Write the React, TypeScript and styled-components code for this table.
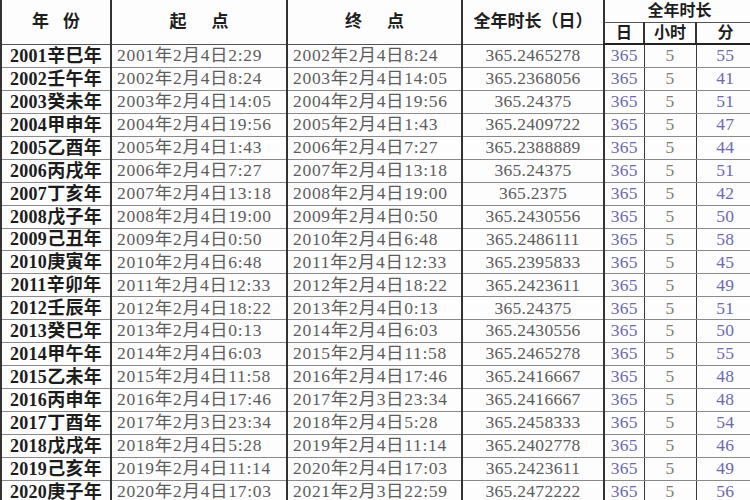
import styled, { createGlobalStyle } from 'styled-components';

const GlobalStyle = createGlobalStyle`
    html, body {
        margin: 0;
        padding: 0;
        background: #fdfdfd;
        overflow: hidden;
    }
    body {
        width: 750px;
        height: 500px;
        font-family: 'Liberation Serif', 'Noto Sans CJK SC', serif;
    }
`;

type Row = {
    year: string;
    start: string;
    end: string;
    days: string;
    min: number;
};

const rows: Row[] = [
    { year: '2001辛巳年', start: '2001年2月4日2:29', end: '2002年2月4日8:24', days: '365.2465278', min: 55 },
    { year: '2002壬午年', start: '2002年2月4日8:24', end: '2003年2月4日14:05', days: '365.2368056', min: 41 },
    { year: '2003癸未年', start: '2003年2月4日14:05', end: '2004年2月4日19:56', days: '365.24375', min: 51 },
    { year: '2004甲申年', start: '2004年2月4日19:56', end: '2005年2月4日1:43', days: '365.2409722', min: 47 },
    { year: '2005乙酉年', start: '2005年2月4日1:43', end: '2006年2月4日7:27', days: '365.2388889', min: 44 },
    { year: '2006丙戌年', start: '2006年2月4日7:27', end: '2007年2月4日13:18', days: '365.24375', min: 51 },
    { year: '2007丁亥年', start: '2007年2月4日13:18', end: '2008年2月4日19:00', days: '365.2375', min: 42 },
    { year: '2008戊子年', start: '2008年2月4日19:00', end: '2009年2月4日0:50', days: '365.2430556', min: 50 },
    { year: '2009己丑年', start: '2009年2月4日0:50', end: '2010年2月4日6:48', days: '365.2486111', min: 58 },
    { year: '2010庚寅年', start: '2010年2月4日6:48', end: '2011年2月4日12:33', days: '365.2395833', min: 45 },
    { year: '2011辛卯年', start: '2011年2月4日12:33', end: '2012年2月4日18:22', days: '365.2423611', min: 49 },
    { year: '2012壬辰年', start: '2012年2月4日18:22', end: '2013年2月4日0:13', days: '365.24375', min: 51 },
    { year: '2013癸巳年', start: '2013年2月4日0:13', end: '2014年2月4日6:03', days: '365.2430556', min: 50 },
    { year: '2014甲午年', start: '2014年2月4日6:03', end: '2015年2月4日11:58', days: '365.2465278', min: 55 },
    { year: '2015乙未年', start: '2015年2月4日11:58', end: '2016年2月4日17:46', days: '365.2416667', min: 48 },
    { year: '2016丙申年', start: '2016年2月4日17:46', end: '2017年2月3日23:34', days: '365.2416667', min: 48 },
    { year: '2017丁酉年', start: '2017年2月3日23:34', end: '2018年2月4日5:28', days: '365.2458333', min: 54 },
    { year: '2018戊戌年', start: '2018年2月4日5:28', end: '2019年2月4日11:14', days: '365.2402778', min: 46 },
    { year: '2019己亥年', start: '2019年2月4日11:14', end: '2020年2月4日17:03', days: '365.2423611', min: 49 },
    { year: '2020庚子年', start: '2020年2月4日17:03', end: '2021年2月3日22:59', days: '365.2472222', min: 56 },
];

const Table = styled.table`
    border-collapse: collapse;
    table-layout: fixed;
    width: 753px;
    border-left: 2px solid #2a2a2a;
`;

const Col = styled.col<{ $w: number }>`
    width: ${({ $w }) => $w}px;
`;

const HeadCell = styled.th<{ $h: number; $size?: number }>`
    height: ${({ $h }) => $h}px;
    padding: 0;
    font-family: 'Liberation Serif', 'Noto Sans CJK SC', serif;
    font-size: ${({ $size }) => $size || 17}px;
    font-weight: 700;
    color: #1e1e1e;
    text-align: center;
    vertical-align: middle;
    border-left: 2px solid #333;
    border-bottom: 1px solid #555;
    line-height: 1;
    white-space: pre;
`;

const HeadRow = styled.tr`
    &:last-child th {
        border-bottom: 2px solid #222;
    }
`;

const Spaced = styled.span<{ $gap: number }>`
    display: inline-flex;
    gap: ${({ $gap }) => $gap}px;
`;

const BodyRow = styled.tr`
    height: 21.95px;
`;

// tone: which colour the value is printed in (the workbook tints the split columns)
const Cell = styled.td<{ $align?: 'left' | 'center'; $tone?: 'year' | 'grey' | 'blue' | 'olive'; $thin?: boolean }>`
    padding: 0 0 0 ${({ $align }) => ($align === 'left' ? 5 : 0)}px;
    height: 21.95px;
    font-family: 'Liberation Serif', 'Noto Sans CJK SC', serif;
    font-size: ${({ $tone }) => ($tone === 'year' ? 18 : 17.5)}px;
    font-weight: ${({ $tone }) => ($tone === 'year' ? 700 : 400)};
    letter-spacing: ${({ $align }) => ($align === 'left' ? 0.7 : 0.3)}px;
    color: ${({ $tone }) =>
        $tone === 'year' ? '#1c1c1c' : $tone === 'blue' ? '#6c6aae' : $tone === 'olive' ? '#7d7d72' : '#5c5c5c'};
    text-align: ${({ $align }) => $align || 'center'};
    vertical-align: middle;
    line-height: 1;
    white-space: nowrap;
    overflow: hidden;
    border-left: ${({ $thin }) => ($thin ? '1.5px solid #3a3a3a' : '2px solid #333')};
    border-bottom: 1px solid #8a8a8a;
`;

export default function App() {
    return (
        <>
            <GlobalStyle />
            <Table>
                <colgroup>
                    <Col $w={110} />
                    <Col $w={176} />
                    <Col $w={175} />
                    <Col $w={142} />
                    <Col $w={40} />
                    <Col $w={52} />
                    <Col $w={58} />
                </colgroup>
                <thead>
                    <HeadRow>
                        <HeadCell $h={22} rowSpan={2}>
                            <Spaced $gap={14}>
                                <span>年</span>
                                <span>份</span>
                            </Spaced>
                        </HeadCell>
                        <HeadCell $h={22} rowSpan={2}>
                            <Spaced $gap={25}>
                                <span>起</span>
                                <span>点</span>
                            </Spaced>
                        </HeadCell>
                        <HeadCell $h={22} rowSpan={2}>
                            <Spaced $gap={25}>
                                <span>终</span>
                                <span>点</span>
                            </Spaced>
                        </HeadCell>
                        <HeadCell $h={22} rowSpan={2}>
                            全年时长（日）
                        </HeadCell>
                        <HeadCell $h={22} colSpan={3} $size={16}>
                            全年时长
                        </HeadCell>
                    </HeadRow>
                    <HeadRow>
                        <HeadCell $h={20} $size={16}>
                            日
                        </HeadCell>
                        <HeadCell $h={20} $size={16}>
                            小时
                        </HeadCell>
                        <HeadCell $h={20} $size={16}>
                            分
                        </HeadCell>
                    </HeadRow>
                </thead>
                <tbody>
                    {rows.map((row) => (
                        <BodyRow key={row.year}>
                            <Cell $tone='year'>{row.year}</Cell>
                            <Cell $align='left' $tone='grey'>
                                {row.start}
                            </Cell>
                            <Cell $align='left' $tone='grey'>
                                {row.end}
                            </Cell>
                            <Cell $tone='grey'>{row.days}</Cell>
                            <Cell $tone='blue'>365</Cell>
                            <Cell $tone='olive' $thin>
                                5
                            </Cell>
                            <Cell $tone='blue' $thin>
                                {row.min}
                            </Cell>
                        </BodyRow>
                    ))}
                </tbody>
            </Table>
        </>
    );
}
